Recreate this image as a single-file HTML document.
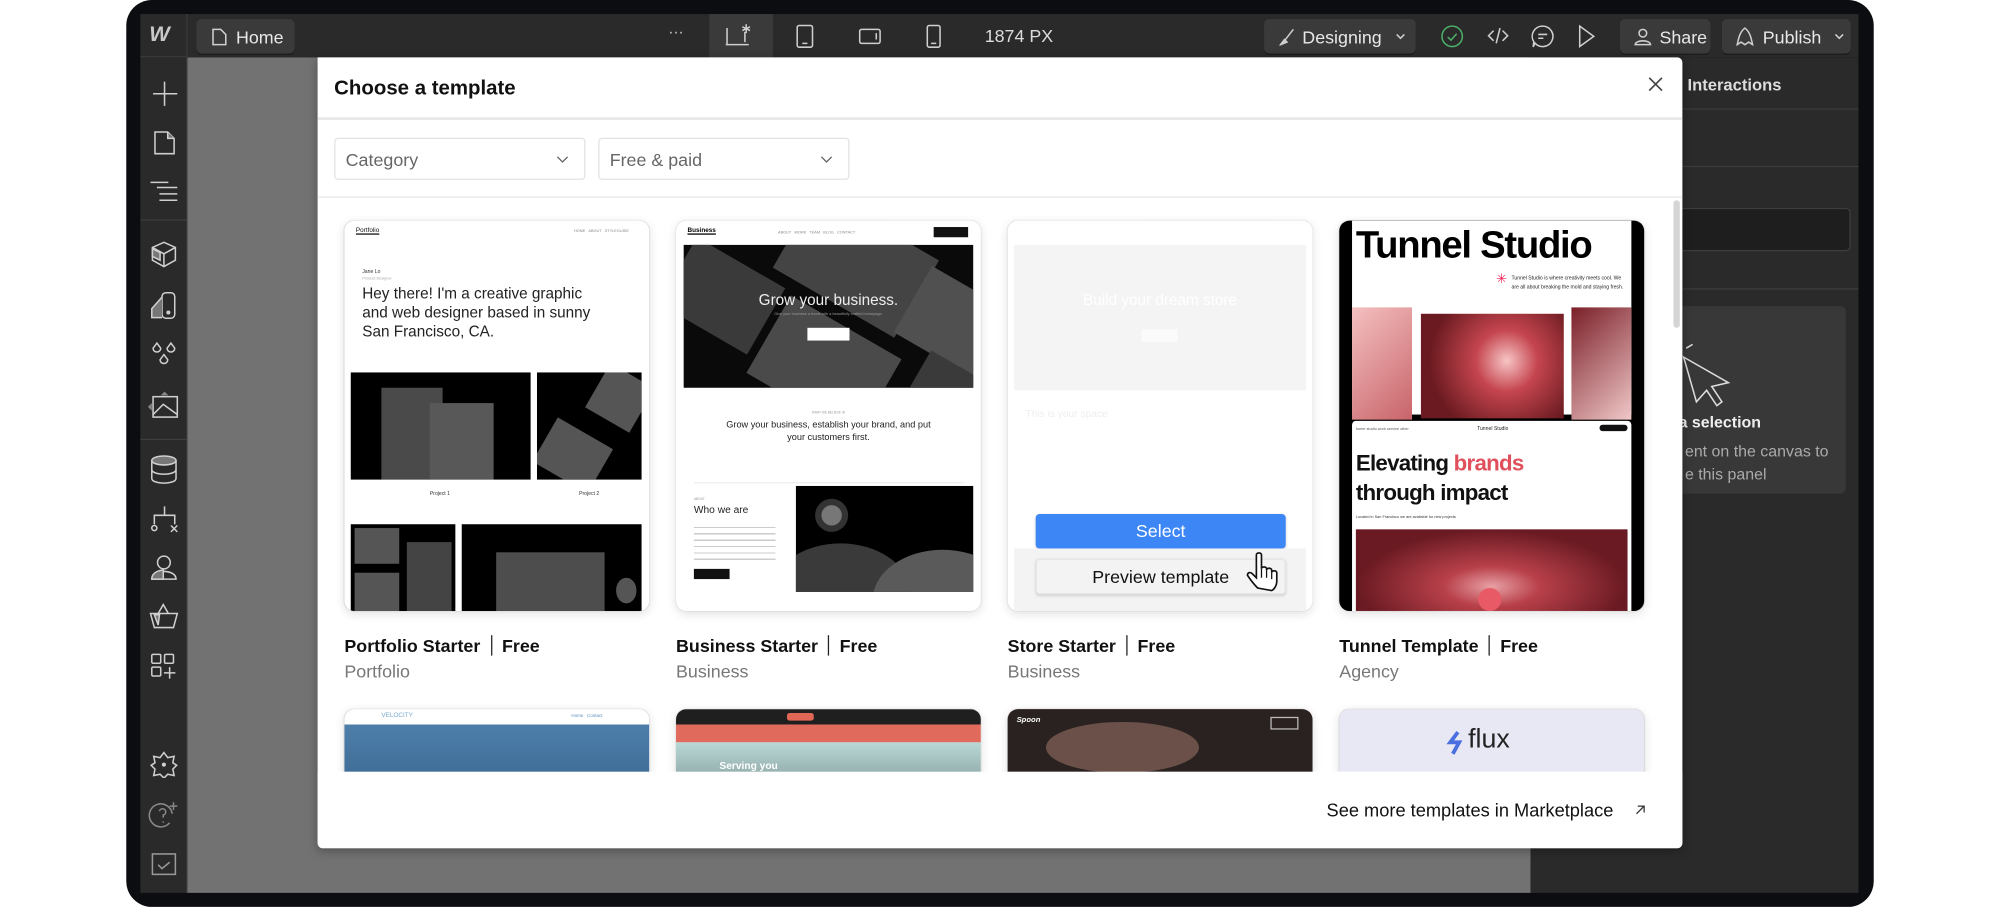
<!DOCTYPE html>
<html><head><meta charset="utf-8">
<style>
*{box-sizing:border-box;margin:0;padding:0}
html,body{width:2000px;height:907px;overflow:hidden;background:#fff;font-family:"Liberation Sans",sans-serif}
#w{position:absolute;left:0;top:0;width:1568px;height:711px;transform:scale(1.27551);transform-origin:0 0}
.a{position:absolute}
.frame{left:99px;top:0;width:1370px;height:711px;background:#0c0d11;border-radius:20px}
.top{left:110px;top:11px;width:1347px;height:34px;background:#2a2a2a}
.side{left:110px;top:45px;width:37px;height:655px;background:#2a2a2a;border-right:1px solid #3a3a3a}
.canvas{left:147px;top:45px;width:1053px;height:655px;background:#727272}
.rp{left:1200px;top:45px;width:257px;height:655px;background:#2a2a2a}
.btn{background:#3a3a3a;border-radius:4px;color:#e8e8e8;font-size:13px;display:flex;align-items:center;box-shadow:0 1px 0 #1a1a1a}
.ic{stroke:#cfcfcf;fill:none;stroke-width:1.2}
.modal{left:249px;top:45px;width:1070px;height:620px;background:#fff;border-radius:0 4px 4px 4px;overflow:hidden;box-shadow:0 2px 8px rgba(0,0,0,.3)}
.dd{position:absolute;top:63px;height:33px;width:197px;border:1px solid #e2e2e2;border-radius:3px;color:#666;font-size:14px;padding:8px 8px}
.dd svg{position:absolute;right:12px;top:13px}
.card{position:absolute;width:239px;height:306px;border-radius:8px;overflow:hidden;background:#fff;box-shadow:0 2px 8px rgba(0,0,0,.12),0 0 1px rgba(0,0,0,.2)}
.t{position:absolute;font-size:14px;color:#111;font-weight:bold;white-space:nowrap}
.t span{font-weight:bold;border-left:1.5px solid #222;margin-left:8px;padding-left:8px}
.s{position:absolute;font-size:14px;color:#777}
.blk{position:absolute;background:#000;overflow:hidden}
.g{position:absolute;background:#555}
</style></head><body><div id="w">
<div class="a frame"></div>
<div class="a top"></div>
<div class="a" style="left:110px;top:11px;width:37px;height:34px;border-right:1px solid #3a3a3a;border-bottom:1px solid #3a3a3a"></div>
<div class="a" style="left:117px;top:17px;font:italic bold 17px 'Liberation Sans';color:#c8c8c8;letter-spacing:-3px">W</div>
<div class="a btn" style="left:154px;top:15px;width:77px;height:27px;padding-left:12px"><svg width="12" height="14" class="ic"><path d="M1 1h6l4 4v8H1z"/></svg><span style="margin-left:7px;font-size:14px">Home</span></div>
<div class="a" style="left:524px;top:18px;color:#ccc;font-size:12px">···</div>
<div class="a" style="left:556px;top:11px;width:50px;height:34px;background:#3a3a3a"></div>
<svg class="a ic" style="left:568px;top:18px" width="26" height="20"><path d="M2 4v13h14M1 17h18M16 15v-8"/><path d="M17 1v7M14 3l6 3M20 3l-6 3"/></svg>
<svg class="a ic" style="left:624px;top:19px" width="14" height="19"><rect x="1" y="1" width="12" height="17" rx="1.5"/><path d="M5 15h4"/></svg>
<svg class="a ic" style="left:673px;top:22px" width="18" height="13"><rect x="1" y="1" width="16" height="11" rx="1.5"/><path d="M14 4v5"/></svg>
<svg class="a ic" style="left:726px;top:19px" width="12" height="19"><rect x="1" y="1" width="10" height="17" rx="1.5"/><path d="M4 15h4"/></svg>
<div class="a" style="left:772px;top:20px;color:#ddd;font-size:14px">1874 PX</div>
<div class="a btn" style="left:991px;top:15px;width:119px;height:27px;padding-left:12px"><svg width="12" height="14" class="ic"><path d="M11 1L4 10"/><path d="M1 13l3-4 2 2z" fill="#ccc"/></svg><span style="margin-left:6px;font-size:14px">Designing</span><svg width="10" height="8" class="ic" style="margin-left:10px"><path d="M2 2l3 3 3-3"/></svg></div>
<svg class="a" style="left:1129px;top:19px" width="19" height="19"><circle cx="9.5" cy="9.5" r="8" fill="none" stroke="#4caf68" stroke-width="1.2"/><path d="M6 10l2.5 2.5 4.5-5" stroke="#4caf68" fill="none" stroke-width="1.2"/></svg>
<svg class="a ic" style="left:1166px;top:20px" width="17" height="16"><path d="M5 4L1 8l4 4M12 4l4 4-4 4M10 2L7 14"/></svg>
<svg class="a ic" style="left:1200px;top:19px" width="19" height="19"><path d="M9.5 1.5a8 8 0 1 1-6 13.3l-1.5 3 .5-4A8 8 0 0 1 9.5 1.5z"/><path d="M6 8h7M6 11h4"/></svg>
<svg class="a ic" style="left:1237px;top:19px" width="14" height="19"><path d="M1.5 1.5v16l11-8z"/></svg>
<div class="a btn" style="left:1270px;top:15px;width:71px;height:27px;padding-left:11px"><svg width="14" height="14" class="ic"><circle cx="7" cy="4" r="3"/><path d="M1 13c0-4 12-4 12 0z"/></svg><span style="margin-left:6px;font-size:14px">Share</span></div>
<div class="a btn" style="left:1350px;top:15px;width:101px;height:27px;padding-left:10px"><svg width="16" height="15" class="ic"><path d="M8 1c-4 3-5 8-6 13l3-2 3 2 3-2 3 2c-1-5-2-10-6-13z"/></svg><span style="margin-left:6px;font-size:14px">Publish</span><svg width="10" height="8" class="ic" style="margin-left:9px"><path d="M2 2l3 3 3-3"/></svg></div>

<div class="a side"></div>
<svg class="a ic" style="left:118px;top:62px;stroke-width:1.2" width="22" height="22"><path d="M11 2v19M2 11.5h19"/></svg>
<svg class="a ic" style="left:120px;top:102px" width="18" height="20"><path d="M1.5 1.5h10l5 5v12h-15z"/><path d="M11.5 1.5v5h5" fill="#777"/></svg>
<svg class="a ic" style="left:117px;top:140px" width="24" height="20"><path d="M1 3h14M6 7h16M8 12h14M8 17h14"/></svg>
<div class="a" style="left:110px;top:172px;width:37px;height:1px;background:#3d3d3d"></div>
<svg class="a ic" style="left:117px;top:188px" width="23" height="23"><path d="M11.5 2l9 4v10l-9 5-9-5V6zM2.5 6l9 5 9-5M11.5 11v10"/><path d="M2.5 7l6 3v6l-6-3z" fill="#777"/></svg>
<svg class="a ic" style="left:117px;top:228px" width="23" height="23"><rect x="10" y="1.5" width="10" height="20" rx="3"/><path d="M10 5L2 14v7h8" fill="#777"/><circle cx="15" cy="17" r="1" fill="#ccc"/></svg>
<svg class="a ic" style="left:117px;top:266px" width="23" height="23"><path d="M6 3l3 4a3 3 0 1 1-6 0zM17 3l3 4a3 3 0 1 1-6 0zM11.5 12l3 4a3 3 0 1 1-6 0z"/></svg>
<svg class="a ic" style="left:115px;top:305px" width="26" height="25"><rect x="5" y="6" width="19" height="16"/><path d="M5 20l8-8 11 8"/><path d="M14 2l3 3h-6zM1 14l3-3v6z" fill="#888" stroke="none"/></svg>
<div class="a" style="left:110px;top:344px;width:37px;height:1px;background:#3d3d3d"></div>
<svg class="a ic" style="left:117px;top:356px" width="23" height="24"><ellipse cx="11.5" cy="5" rx="9.5" ry="3.5" fill="#777"/><path d="M2 5v14c0 5 19 5 19 0V5M2 12c0 5 19 5 19 0"/></svg>
<svg class="a ic" style="left:117px;top:396px" width="24" height="22"><path d="M12 1v7M4 15V8h16v7"/><circle cx="4" cy="18" r="2"/><path d="M17 16l5 5M22 16l-5 5"/></svg>
<svg class="a ic" style="left:117px;top:434px" width="23" height="22"><circle cx="11.5" cy="7" r="5"/><path d="M2 20c0-8 19-8 19 0z"/><path d="M2 20c0-6 7-7 9-7v7z" fill="#777"/></svg>
<svg class="a ic" style="left:116px;top:472px" width="25" height="22"><path d="M2 9h21l-3 11H5zM8 9l4-7 4 7"/><path d="M5 10l3 8 1-8z" fill="#777"/></svg>
<svg class="a ic" style="left:117px;top:511px" width="22" height="22"><rect x="2" y="2" width="7" height="7" rx="1"/><rect x="12" y="2" width="7" height="7" rx="1"/><rect x="2" y="12" width="7" height="7" rx="1"/><path d="M16 12v9M11.5 16.5h9"/></svg>
<svg class="a ic" style="left:117px;top:588px" width="23" height="22"><path d="M11.5 2l3 4 5-1-1 5 3 2-3 3 1 5-5-1-3 3-3-3-5 1 1-5-3-3 3-2-1-5 5 1z"/><circle cx="11.5" cy="11.5" r="1" fill="#ccc"/></svg>
<svg class="a ic" style="left:116px;top:627px;stroke:#888" width="26" height="24"><path d="M17 18a9 9 0 1 1 2-7"/><path d="M9 9a2.5 2.5 0 1 1 3 3v2M12 17v1"/><path d="M20 2v6M17 5h6"/></svg>
<svg class="a ic" style="left:118px;top:668px;stroke:#999" width="22" height="20"><rect x="1.5" y="1.5" width="18" height="16"/><path d="M6 10l3 3 6-5"/></svg>

<div class="a canvas"></div>
<div class="a rp"></div>
<div class="a" style="left:1323px;top:59px;color:#ddd;font-size:13px;font-weight:bold">Interactions</div>
<div class="a" style="left:1200px;top:85px;width:257px;height:1px;background:#3c3c3c"></div>
<div class="a" style="left:1200px;top:130px;width:257px;height:1px;background:#3c3c3c"></div>
<div class="a" style="left:1200px;top:163px;width:251px;height:34px;background:#1e1e1e;border:1px solid #3d3d3d;border-radius:4px"></div>
<div class="a" style="left:1200px;top:226px;width:257px;height:1px;background:#3c3c3c"></div>
<div class="a" style="left:1200px;top:240px;width:247px;height:147px;background:#383838;border-radius:4px"></div>
<svg class="a" style="left:1200px;top:245px" width="160" height="75"><path d="M116 16l-1 7M127 25l-5 3M120 35l35 20-13 3 8 12-4 3-8-12-8 9z" stroke="#ddd" fill="none" stroke-width="1.2"/></svg>
<div class="a" style="left:1316px;top:324px;color:#eee;font-size:12.5px;font-weight:bold">a selection</div>
<div class="a" style="left:1321px;top:345px;color:#aaa;font-size:12.5px;line-height:18px">ent on the canvas to<br>e this panel</div>

<div class="a modal">
  <div class="a" style="left:13px;top:16px;font-size:16px;font-weight:bold;color:#111">Choose a template</div>
  <svg class="a" style="left:1043px;top:15px" width="12" height="12"><path d="M1 1l10 10M11 1L1 11" stroke="#444" stroke-width="1.3"/></svg>
  <div class="a" style="left:0;top:47px;width:1070px;height:2px;background:#e6e6e6"></div>
  <div class="dd" style="left:13px">Category<svg width="10" height="7"><path d="M1 1l4 4 4-4" stroke="#666" fill="none"/></svg></div>
  <div class="dd" style="left:220px">Free &amp; paid<svg width="10" height="7"><path d="M1 1l4 4 4-4" stroke="#666" fill="none"/></svg></div>
  <div class="a" style="left:0;top:109px;width:1070px;height:1px;background:#e6e6e6"></div>
  <div class="a" style="left:1063px;top:112px;width:5px;height:100px;background:#d5d5d5;border-radius:3px"></div>

  <div class="card" style="left:21px;top:128px">
    <div class="a" style="left:9px;top:5px;font-size:5px;text-decoration:underline;color:#111">Portfolio</div>
    <div class="a" style="left:180px;top:6px;font-size:3px;color:#888">HOME &nbsp; ABOUT &nbsp; STYLEGUIDE</div>
    <div class="a" style="left:14px;top:37px;font-size:4px;color:#333">Jane Lo</div>
    <div class="a" style="left:14px;top:43px;font-size:3px;color:#aaa">Product Designer</div>
    <div class="a" style="left:14px;top:50px;font-size:12px;line-height:15px;color:#222;white-space:nowrap">Hey there! I'm a creative graphic<br>and web designer based in sunny<br>San Francisco, CA.</div>
    <div class="blk" style="left:5px;top:119px;width:141px;height:84px"><div class="g" style="left:24px;top:12px;width:48px;height:72px;background:#4a4a4a"></div><div class="g" style="left:62px;top:24px;width:50px;height:60px;background:#585858"></div></div>
    <div class="blk" style="left:151px;top:119px;width:82px;height:84px"><div class="g" style="left:45px;top:0;width:40px;height:40px;transform:rotate(30deg)"></div><div class="g" style="left:3px;top:45px;width:50px;height:40px;transform:rotate(30deg)"></div></div>
    <div class="a" style="left:67px;top:211px;font-size:4px;color:#333">Project 1</div>
    <div class="a" style="left:184px;top:211px;font-size:4px;color:#333">Project 2</div>
    <div class="blk" style="left:5px;top:238px;width:82px;height:70px"><div class="g" style="left:3px;top:3px;width:35px;height:28px"></div><div class="g" style="left:44px;top:14px;width:35px;height:56px;background:#444"></div><div class="g" style="left:3px;top:38px;width:35px;height:32px"></div></div>
    <div class="blk" style="left:92px;top:238px;width:141px;height:70px"><div class="g" style="left:27px;top:22px;width:85px;height:48px;background:#4d4d4d"></div><div class="g" style="left:121px;top:42px;width:16px;height:20px;border-radius:50%"></div></div>
  </div>
  <div class="card" style="left:281px;top:128px">
    <div class="a" style="left:9px;top:5px;font-size:5px;font-weight:bold;text-decoration:underline">Business</div>
    <div class="a" style="left:80px;top:7px;font-size:3px;color:#888">ABOUT &nbsp; WORK &nbsp; TEAM &nbsp; BLOG &nbsp; CONTACT</div>
    <div class="a" style="left:202px;top:5px;width:27px;height:8px;background:#111"></div>
    <div class="a" style="left:6px;top:19px;width:227px;height:112px;background:#0a0a0a;overflow:hidden">
      <div class="g" style="left:-10px;top:10px;width:80px;height:60px;transform:rotate(30deg);background:#3a3a3a"></div>
      <div class="g" style="left:80px;top:-20px;width:110px;height:70px;transform:rotate(30deg);background:#444"></div>
      <div class="g" style="left:60px;top:60px;width:100px;height:70px;transform:rotate(30deg);background:#4a4a4a"></div>
      <div class="g" style="left:175px;top:30px;width:70px;height:60px;transform:rotate(30deg);background:#505050"></div>
      <div class="g" style="left:180px;top:95px;width:60px;height:40px;transform:rotate(30deg);background:#3a3a3a"></div>
      <div class="a" style="left:0;width:227px;top:36px;text-align:center;color:#eee;font-size:12px">Grow your business.</div>
      <div class="a" style="left:0;width:227px;top:52px;text-align:center;color:#999;font-size:3px">Give your business a boost with a beautifully crafted homepage.</div>
      <div class="a" style="left:97px;top:65px;width:33px;height:10px;background:#fff"></div>
    </div>
    <div class="a" style="left:0;width:239px;top:149px;text-align:center;font-size:2.5px;color:#999">WHAT WE BELIEVE IN</div>
    <div class="a" style="left:0;width:239px;top:155px;text-align:center;font-size:7.2px;line-height:10px;color:#222">Grow your business, establish your brand, and put<br>your customers first.</div>
    <div class="a" style="left:14px;top:205px;width:212px;height:1px;background:#eee"></div>
    <div class="a" style="left:14px;top:217px;font-size:2.5px;color:#999">ABOUT</div>
    <div class="a" style="left:14px;top:222px;font-size:8px;color:#222">Who we are</div>
    <div class="a" style="left:14px;top:236px;width:64px;height:30px;background:repeating-linear-gradient(#fff 0 4px,#ccc 4px 5px)"></div>
    <div class="a" style="left:14px;top:273px;width:28px;height:8px;background:#111"></div>
    <div class="blk" style="left:94px;top:208px;width:139px;height:83px"><div class="a" style="left:15px;top:10px;width:26px;height:26px;border-radius:50%;background:#333"></div><div class="a" style="left:20px;top:15px;width:16px;height:16px;border-radius:50%;background:#777"></div><div class="a" style="left:-20px;top:45px;width:110px;height:80px;border-radius:50%;background:#3a3a3a"></div><div class="a" style="left:60px;top:50px;width:110px;height:80px;border-radius:50%;background:#5a5a5a"></div></div>
  </div>
  <div class="card" style="left:541px;top:128px">
    <div class="a" style="left:5px;top:19px;width:229px;height:114px;background:#f4f4f4"><div class="a" style="left:0;width:229px;top:36px;text-align:center;color:#fff;font-size:12px">Build your dream store</div><div class="a" style="left:100px;top:66px;width:28px;height:10px;background:#fbfbfb"></div></div>
    <div class="a" style="left:14px;top:147px;font-size:8px;color:#eee">This is your space</div>
    <div class="a" style="left:22px;top:230px;width:196px;height:27px;background:#3c87f5;border-radius:3px;color:#fff;font-size:14px;text-align:center;line-height:27px;box-shadow:0 1px 2px rgba(0,0,0,.2)">Select</div>
    <div class="a" style="left:5px;top:257px;width:229px;height:49px;background:#f3f3f3"></div>
    <div class="a" style="left:22px;top:265px;width:196px;height:28px;background:#f3f3f3;border:1px solid #e6e6e6;border-radius:3px;color:#111;font-size:14px;text-align:center;line-height:27px;box-shadow:0 1px 2px rgba(0,0,0,.15)">Preview template</div>
    <svg class="a" style="left:186px;top:258px" width="32" height="36"><path d="M10 30c-3-3-6-7-8-10 0-2 2-3 4-1l3 3V4c0-2 4-2 4 0v11c0-2 4-2 4 0v1c0-2 4-2 4 0v2c0-2 4-2 4 0v7c0 3-2 6-4 7z" fill="#fff" stroke="#111" stroke-width="1.3"/><path d="M13 15v7M17 16v6M21 18v5" stroke="#111"/></svg>
  </div>
  <div class="card" style="left:801px;top:128px;background:#000">
    <div class="a" style="left:10px;top:0;width:219px;height:152px;background:#fff"></div>
    <div class="a" style="left:13px;top:3px;font-size:30px;font-weight:bold;color:#000;letter-spacing:-1px">Tunnel Studio</div>
    <div class="a" style="left:123px;top:41px;color:#e25;font-size:10px">✳</div>
    <div class="a" style="left:135px;top:41px;font-size:4px;line-height:7px;color:#222">Tunnel Studio is where creativity meets cool. We<br>are all about breaking the mold and staying fresh.</div>
    <div class="a" style="left:10px;top:68px;width:47px;height:88px;background:linear-gradient(135deg,#f4c0c0,#c8646a)"></div>
    <div class="a" style="left:64px;top:73px;width:112px;height:82px;background:radial-gradient(circle at 60% 45%,#f7c5c5 0,#c5454f 30%,#6a1a20 75%)"></div>
    <div class="a" style="left:182px;top:68px;width:47px;height:88px;background:linear-gradient(135deg,#7a1f28,#f0c8c8)"></div>
    <div class="a" style="left:10px;top:157px;width:219px;height:153px;background:#fff;border-radius:3px"></div>
    <div class="a" style="left:13px;top:161px;font-size:3px;color:#555">home studio work service other</div>
    <div class="a" style="left:108px;top:160px;font-size:4px;color:#222">Tunnel Studio</div>
    <div class="a" style="left:204px;top:160px;width:22px;height:5px;background:#111;border-radius:3px"></div>
    <div class="a" style="left:13px;top:179px;font-size:17.5px;line-height:23px;font-weight:bold;color:#111;letter-spacing:-.6px">Elevating <span style="color:#e0505c">brands</span><br>through impact</div>
    <div class="a" style="left:13px;top:230px;font-size:3px;color:#333">Located in San Francisco we are available for new projects</div>
    <div class="a" style="left:13px;top:242px;width:213px;height:64px;background:radial-gradient(ellipse at 50% 70%,#e8a0a5 0,#b8404a 25%,#6a1a22 70%)"></div>
    <div class="a" style="left:109px;top:288px;width:18px;height:18px;border-radius:50%;background:#e85a66"></div>
  </div>
  <div class="t" style="left:21px;top:453px">Portfolio Starter<span>Free</span></div>
  <div class="s" style="left:21px;top:473px">Portfolio</div>
  <div class="t" style="left:281px;top:453px">Business Starter<span>Free</span></div>
  <div class="s" style="left:281px;top:473px">Business</div>
  <div class="t" style="left:541px;top:453px">Store Starter<span>Free</span></div>
  <div class="s" style="left:541px;top:473px">Business</div>
  <div class="t" style="left:801px;top:453px">Tunnel Template<span>Free</span></div>
  <div class="s" style="left:801px;top:473px">Agency</div>

  <div class="card" style="left:21px;top:511px;height:60px"><div class="a" style="left:0;top:12px;width:239px;height:50px;background:linear-gradient(#4d7eaa,#3d6a94)"></div><div class="a" style="left:29px;top:2px;font-size:5px;color:#7aa9d0">VELOCITY</div><div class="a" style="left:178px;top:3px;font-size:3.5px;color:#5a8fc0">Home &nbsp; Contact</div></div>
  <div class="card" style="left:281px;top:511px;height:60px"><div class="a" style="left:0;top:0;width:239px;height:12px;background:#1f1f1f"></div><div class="a" style="left:87px;top:3px;width:21px;height:6px;background:#e06655;border-radius:2px"></div><div class="a" style="left:0;top:12px;width:239px;height:14px;background:#e06a5c"></div><div class="a" style="left:0;top:26px;width:239px;height:30px;background:linear-gradient(#b8d8d6,#8fa8a6)"></div><div class="a" style="left:34px;top:40px;font-size:8px;color:#fff;font-weight:bold">Serving you</div></div>
  <div class="card" style="left:541px;top:511px;height:60px;background:#2a2220"><div class="a" style="left:30px;top:10px;width:120px;height:40px;background:#6a5048;border-radius:50%"></div><div class="a" style="left:7px;top:6px;font:italic bold 6px 'Liberation Sans';color:#fff">Spoon</div><div class="a" style="left:206px;top:6px;width:22px;height:10px;border:1px solid #bbb"></div></div>
  <div class="card" style="left:801px;top:511px;height:60px;background:#e8e8f5"><div class="a" style="left:101px;top:12px;font-size:21px;color:#222">flux</div><svg class="a" style="left:84px;top:17px" width="16" height="20"><path d="M9 1L3 9h7l-5 9" stroke="#4a6fe0" stroke-width="3" fill="none"/></svg></div>
  <div class="a" style="left:0;top:560px;width:1070px;height:60px;background:#fff"></div>
  <div class="a" style="left:791px;top:583px;font-size:14.3px;color:#111">See more templates in Marketplace</div>
  <svg class="a" style="left:1032px;top:585px" width="10" height="10"><path d="M2 8l6-6M3 2h5v5" stroke="#333" fill="none"/></svg>
</div>
</div></body></html>
